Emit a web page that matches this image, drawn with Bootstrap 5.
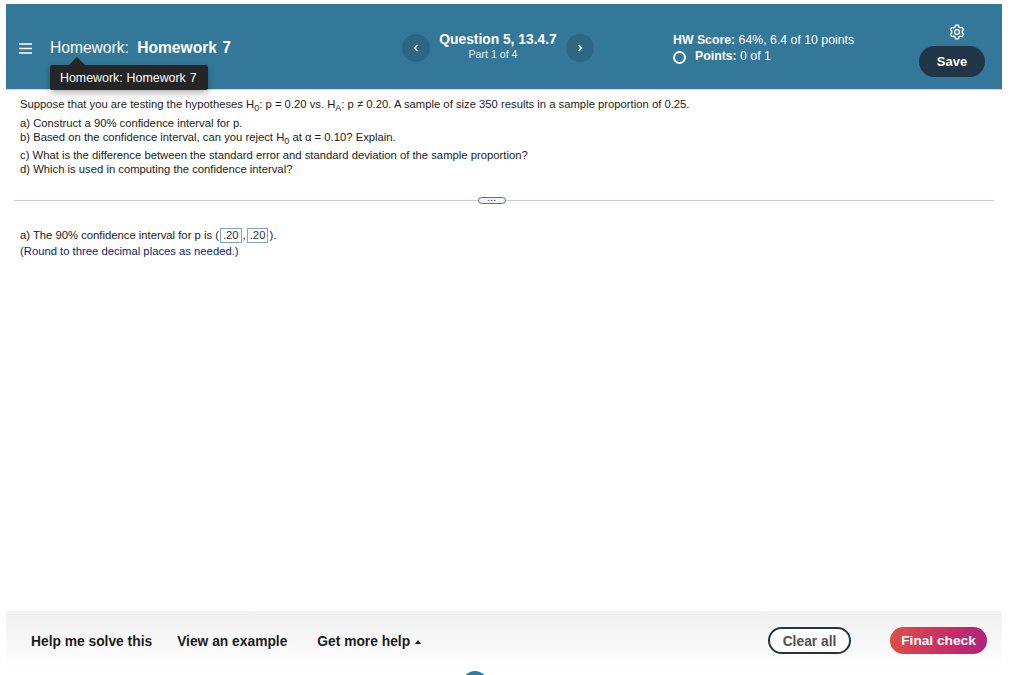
<!DOCTYPE html>
<html lang="en">
<head>
<meta charset="utf-8">
<title>Homework</title>
<link rel="stylesheet" href="https://cdn.jsdelivr.net/npm/bootstrap@5.3.0/dist/css/bootstrap.min.css">
<style>
html,body{height:100%;overflow:hidden;background:#fff}
body{font-family:"Liberation Sans",Arial,sans-serif;color:#1a1a1a}
.shell{width:996px;height:675px;margin-left:6px;padding-top:4px;position:relative}
.hw-head{height:86px;background:#337899;color:#fff;border-bottom:1px solid #c9dbe5;position:relative}
.zone-title{width:383px;padding-left:13px;gap:18px;padding-top:3px}
.hw-name{font-size:15.6px;line-height:18px;word-spacing:1px}
.hw-name b{margin-left:3px}
.zone-q{width:192px;margin-left:13px;padding-top:3px}
.circ{width:28px;height:28px;border-radius:50%;background:#2e6685;flex:none}
.q-mid{width:137px;text-align:center}
.q-title{font-size:13.8px;font-weight:700;line-height:16px;margin-top:-3px}
.q-part{font-size:10.6px;line-height:13px;color:#e2ecf1;margin-top:0;padding-right:10px}
.zone-score{width:251px;margin-left:79px;font-size:12.3px;line-height:15.5px;padding-top:29px}
.gap-ring{gap:9px}
.ring{width:13px;height:13px;border:2px solid #fff;border-radius:50%;display:inline-block;flex:none;margin-top:2px}
.zone-act{width:66px;margin-left:-5px;padding-top:20px}
.zone-act svg{margin-left:10px}
.save-b{width:66px;height:31px;border-radius:16px;background:#213547;color:#fff;font-size:13px;font-weight:700;border:0;padding:0;margin-top:6px}
.tip{position:absolute;left:44px;top:61px;width:158px;height:25px;background:#252525;color:#fff;font-size:12.4px;line-height:26px;padding-left:10px;border-radius:2px;box-shadow:0 3px 7px rgba(0,0,0,.3);word-spacing:.5px;white-space:nowrap}
.tip::before{content:"";position:absolute;left:19px;top:-8px;border:8px solid transparent;border-top:0;border-bottom-color:#252525}
.stem{padding:7px 0 0 14px;font-size:11.27px;line-height:14px;color:#1c1c1c;height:103px}
.stem p{margin:0}
.stem sub{font-size:9px;bottom:-.3em;line-height:0}
.gap-a{margin-top:5px!important}
.gap-b{margin-top:3.5px!important}
.split{height:1px;background:#d9c3cc;margin:7px 8px 0 8px;position:relative;width:980px;margin-left:8px}
.split i{position:absolute;left:464px;top:-3px;width:28px;height:7px;border:1px solid #56708c;border-radius:4px;background:#f1f4f8;color:#34485e;font:700 8px/2px "Liberation Sans",sans-serif;text-align:center;font-style:normal;letter-spacing:1px}
.answer{padding:26px 0 0 14px;font-size:11.27px;line-height:16px}
.answer p{margin:0}
.box{display:inline-block;height:15px;line-height:13px;border:1px solid #7ba6d4;padding:0 2px;margin:0 1px;vertical-align:0;color:#333}
.hint{color:#0a1d80}
.foot{position:absolute;left:0;right:0;top:611px;height:59px;background:linear-gradient(#f1f1f1,#fff);padding-left:25px;padding-top:16px}
.lnk{font-size:13.8px;font-weight:700;color:#1b1b1b;line-height:30px;white-space:nowrap}
.lnk-1{margin-right:25px}
.lnk-2{margin-right:30px}
.tri{display:inline-block;border:3.5px solid transparent;border-top:0;border-bottom:4px solid #1b1b1b;margin-left:5px;vertical-align:2px}
.clr{position:absolute;left:762px;top:16px;width:83px;height:27px;border:2px solid #263345;border-radius:14px;background:#fff;color:#505050;font-size:13.8px;font-weight:700;padding:2px 0 0;line-height:22px}
.fin{position:absolute;left:884px;top:16px;width:97px;height:27px;border:0;border-radius:14px;background:linear-gradient(100deg,#de4f45,#c92c67 60%,#ad2478);color:#fff;font-size:13.7px;font-weight:700;padding:2px 0 0}
.dot{position:absolute;left:456px;top:671px;width:26px;height:26px;border-radius:50%;background:#2f7ca6}
</style>
</head>
<body>
<div class="shell">
  <header class="hw-head d-flex align-items-center">
    <div class="zone-title d-flex align-items-center">
      <svg width="13" height="11" viewBox="0 0 13 11"><path d="M0 1h13M0 5.5h13M0 10h13" stroke="#fff" stroke-width="1.4"/></svg>
      <span class="hw-name">Homework: <b>Homework 7</b></span>
    </div>
    <div class="zone-q d-flex align-items-center">
      <span class="circ d-flex align-items-center justify-content-center"><svg width="6" height="8" viewBox="0 0 6 8"><path d="M4.5 1 1.7 4l2.8 3" fill="none" stroke="#fff" stroke-width="1.4"/></svg></span>
      <div class="q-mid"><div class="q-title">Question 5, 13.4.7</div><div class="q-part">Part 1 of 4</div></div>
      <span class="circ d-flex align-items-center justify-content-center"><svg width="6" height="8" viewBox="0 0 6 8"><path d="M1.5 1 4.3 4 1.5 7" fill="none" stroke="#fff" stroke-width="1.4"/></svg></span>
    </div>
    <div class="zone-score align-self-start">
      <div><b>HW Score:</b> 64%, 6.4 of 10 points</div>
      <div class="d-flex gap-ring"><span class="ring"></span><span><b>Points:</b> 0 of 1</span></div>
    </div>
    <div class="zone-act align-self-start d-flex flex-column align-items-center">
      <svg width="16" height="16" viewBox="0 0 16 16" fill="none" stroke="#fff" stroke-width="1.3"><path d="M6.6 1.2h2.8l.5 1.9 1.4.8 1.9-.5 1.4 2.4-1.4 1.4v1.6l1.4 1.4-1.4 2.4-1.9-.5-1.4.8-.5 1.9H6.6l-.5-1.9-1.4-.8-1.9.5-1.4-2.4 1.4-1.4V7.2L1.4 5.8l1.4-2.4 1.9.5 1.4-.8z" stroke-linejoin="round"/><circle cx="8" cy="8" r="2.4"/></svg>
      <button class="save-b btn">Save</button>
    </div>
    <div class="tip">Homework: Homework 7</div>
  </header>
  <section class="stem">
    <p>Suppose that you are testing the hypotheses H<sub>0</sub>: p = 0.20 vs. H<sub>A</sub>: p ≠ 0.20. A sample of size 350 results in a sample proportion of 0.25.</p>
    <p class="gap-a">a) Construct a 90% confidence interval for p.</p>
    <p>b) Based on the confidence interval, can you reject H<sub>0</sub> at α = 0.10? Explain.</p>
    <p class="gap-b">c) What is the difference between the standard error and standard deviation of the sample proportion?</p>
    <p>d) Which is used in computing the confidence interval?</p>
  </section>
  <div class="split"><i>...</i></div>
  <section class="answer">
    <p>a) The 90% confidence interval for p is (<span class="box">.20</span>,<span class="box">.20</span>).</p>
    <p class="hint">(Round to three decimal places as needed.)</p>
  </section>
  <footer class="foot d-flex align-items-start">
    <span class="lnk lnk-1">Help me solve this</span>
    <span class="lnk lnk-2">View an example</span>
    <span class="lnk">Get more help<span class="tri"></span></span>
    <button class="clr btn">Clear all</button>
    <button class="fin btn">Final check</button>
  </footer>
  <div class="dot"></div>
</div>
<script src="https://cdn.jsdelivr.net/npm/bootstrap@5.3.0/dist/js/bootstrap.bundle.min.js"></script>
</body>
</html>
